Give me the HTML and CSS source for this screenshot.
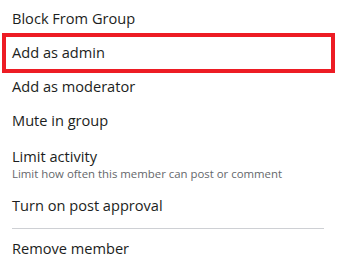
FILE: index.html
```html
<!DOCTYPE html>
<html>
<head>
<meta charset="utf-8">
<link rel="stylesheet" href="styles.css">
</head>
<body>
<ul class="menu">
  <li class="item">Block From Group</li>
  <li class="item highlighted">Add as admin</li>
  <li class="item">Add as moderator</li>
  <li class="item">Mute in group</li>
  <li class="item item-sub">
    <div class="title">Limit activity</div>
    <div class="sub">Limit how often this member can post or comment</div>
  </li>
  <li class="item">Turn on post approval</li>
  <li class="divider"></li>
  <li class="item">Remove member</li>
</ul>
</body>
</html>
```
FILE: styles.css
```css
html, body {
  margin: 0;
  padding: 0;
  background: #ffffff;
}
body {
  width: 338px;
  height: 270px;
  overflow: hidden;
  font-family: "Open Sans", "Noto Sans", sans-serif;
  color: #1c1e21;
}
.menu {
  list-style: none;
  margin: 0;
  padding: 1px 0 0 0;
}
.item {
  position: relative;
  padding: 8px 12px;
  font-size: 14.6px;
  line-height: 18px;
}
.highlighted::after {
  content: "";
  position: absolute;
  top: -2px;
  bottom: -4px;
  left: 2px;
  right: 3px;
  border: 4px solid #ed1c24;
}
.item-sub {
  padding-top: 10px;
  padding-bottom: 7px;
}
.sub {
  font-size: 11.4px;
  line-height: 16px;
  color: #65676b;
  margin-top: 1px;
  margin-bottom: -1px;
}
.divider {
  height: 1px;
  background: #ced0d4;
  margin: 6px 14px 2px 12px;
}
```
